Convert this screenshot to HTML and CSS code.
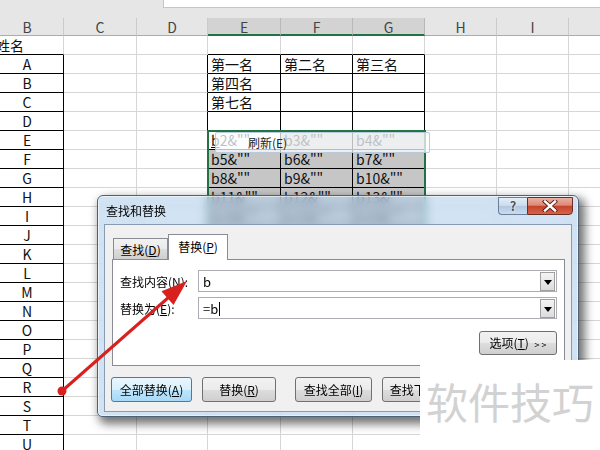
FILE: index.html
```html
<!DOCTYPE html>
<html lang="zh-CN">
<head>
<meta charset="utf-8">
<title>查找和替换</title>
<link rel="stylesheet" href="styles.css">
</head>
<body>
<div class="topbar"><div class="fx"></div></div>
<div class="sheet">
  <div class="h">B</div><div class="h">C</div><div class="h">D</div><div class="h hs">E</div><div class="h hs">F</div><div class="h hs">G</div><div class="h">H</div><div class="h">I</div><div class="h"></div>

  <div class="c kb lft">姓名</div><div class="c"></div><div class="c"></div><div class="c kb"></div><div class="c kb"></div><div class="c kb"></div><div class="c"></div><div class="c"></div><div class="c"></div>

  <div class="c k ctr">A</div><div class="c"></div><div class="c kr"></div><div class="c k">第一名</div><div class="c k">第二名</div><div class="c k">第三名</div><div class="c"></div><div class="c"></div><div class="c"></div>
  <div class="c k ctr">B</div><div class="c"></div><div class="c kr"></div><div class="c k">第四名</div><div class="c k"></div><div class="c k"></div><div class="c"></div><div class="c"></div><div class="c"></div>
  <div class="c k ctr">C</div><div class="c"></div><div class="c kr"></div><div class="c k">第七名</div><div class="c k"></div><div class="c k"></div><div class="c"></div><div class="c"></div><div class="c"></div>
  <div class="c k ctr">D</div><div class="c"></div><div class="c kr"></div><div class="c k"></div><div class="c k"></div><div class="c k"></div><div class="c"></div><div class="c"></div><div class="c"></div>

  <div class="c k ctr">E</div><div class="c"></div><div class="c kr"></div><div class="c k"><u>b</u>2&amp;""</div><div class="c k sel">b3&amp;""</div><div class="c k sel">b4&amp;""</div><div class="c"></div><div class="c"></div><div class="c"></div>
  <div class="c k ctr">F</div><div class="c"></div><div class="c kr"></div><div class="c k sel">b5&amp;""</div><div class="c k sel">b6&amp;""</div><div class="c k sel">b7&amp;""</div><div class="c"></div><div class="c"></div><div class="c"></div>
  <div class="c k ctr">G</div><div class="c"></div><div class="c kr"></div><div class="c k sel">b8&amp;""</div><div class="c k sel">b9&amp;""</div><div class="c k sel">b10&amp;""</div><div class="c"></div><div class="c"></div><div class="c"></div>
  <div class="c k ctr">H</div><div class="c"></div><div class="c kr"></div><div class="c k sel">b11&amp;""</div><div class="c k sel">b12&amp;""</div><div class="c k sel">b13&amp;""</div><div class="c"></div><div class="c"></div><div class="c"></div>
  <div class="c k ctr">I</div><div class="c"></div><div class="c kr"></div><div class="c k sel">b14&amp;""</div><div class="c k sel">b15&amp;""</div><div class="c k sel">b16&amp;""</div><div class="c"></div><div class="c"></div><div class="c"></div>
  <div class="c k ctr">J</div><div class="c"></div><div class="c kr"></div><div class="c k sel">b17&amp;""</div><div class="c k sel">b18&amp;""</div><div class="c k sel">b19&amp;""</div><div class="c"></div><div class="c"></div><div class="c"></div>
  <div class="c k ctr">K</div><div class="c"></div><div class="c kr"></div><div class="c k sel">b20&amp;""</div><div class="c k sel">b21&amp;""</div><div class="c k sel">b22&amp;""</div><div class="c"></div><div class="c"></div><div class="c"></div>

  <div class="c k ctr">L</div><div class="c"></div><div class="c"></div><div class="c"></div><div class="c"></div><div class="c"></div><div class="c"></div><div class="c"></div><div class="c"></div>
  <div class="c k ctr">M</div><div class="c"></div><div class="c"></div><div class="c"></div><div class="c"></div><div class="c"></div><div class="c"></div><div class="c"></div><div class="c"></div>
  <div class="c k ctr">N</div><div class="c"></div><div class="c"></div><div class="c"></div><div class="c"></div><div class="c"></div><div class="c"></div><div class="c"></div><div class="c"></div>
  <div class="c k ctr">O</div><div class="c"></div><div class="c"></div><div class="c"></div><div class="c"></div><div class="c"></div><div class="c"></div><div class="c"></div><div class="c"></div>
  <div class="c k ctr">P</div><div class="c"></div><div class="c"></div><div class="c"></div><div class="c"></div><div class="c"></div><div class="c"></div><div class="c"></div><div class="c"></div>
  <div class="c k ctr">Q</div><div class="c"></div><div class="c"></div><div class="c"></div><div class="c"></div><div class="c"></div><div class="c"></div><div class="c"></div><div class="c"></div>
  <div class="c k ctr">R</div><div class="c"></div><div class="c"></div><div class="c"></div><div class="c"></div><div class="c"></div><div class="c"></div><div class="c"></div><div class="c"></div>
  <div class="c k ctr">S</div><div class="c"></div><div class="c"></div><div class="c"></div><div class="c"></div><div class="c"></div><div class="c"></div><div class="c"></div><div class="c"></div>
  <div class="c k ctr">T</div><div class="c"></div><div class="c"></div><div class="c"></div><div class="c"></div><div class="c"></div><div class="c"></div><div class="c"></div><div class="c"></div>
  <div class="c k ctr">U</div><div class="c"></div><div class="c"></div><div class="c"></div><div class="c"></div><div class="c"></div><div class="c"></div><div class="c"></div><div class="c"></div>
</div>

<div class="selbox"></div>
<div class="tip">刷新(E)</div>

<div class="dialog">
  <div class="titlebar">查找和替换</div>
  <div class="capbtns">
    <div class="help">?</div>
    <div class="close"><svg width="16" height="12" viewBox="0 0 16 12"><path d="M3 1.5 L13 10.5 M13 1.5 L3 10.5" stroke="#5a1e16" stroke-width="4.2" stroke-linecap="square"/><path d="M3 1.5 L13 10.5 M13 1.5 L3 10.5" stroke="#fff" stroke-width="2.4" stroke-linecap="square"/></svg></div>
  </div>
  <div class="client">
    <div class="tabs">
      <div class="tab">查找(<u>D</u>)</div>
      <div class="tab on">替换(<u>P</u>)</div>
    </div>
    <div class="panel">
      <div class="row">
        <div class="lbl">查找内容(<u>N</u>):</div>
        <div class="inp"><span class="val">b</span><div class="dd"></div></div>
      </div>
      <div class="row">
        <div class="lbl">替换为(<u>E</u>):</div>
        <div class="inp"><span class="val">=b<span class="caret"></span></span><div class="dd"></div></div>
      </div>
      <div class="optrow"><div class="btn opt">选项(<u>T</u>) <span class="gt">&gt; &gt;</span></div></div>
    </div>
    <div class="btnrow">
      <div class="btn def w1">全部替换(<u>A</u>)</div>
      <div class="btn w2">替换(<u>R</u>)</div>
      <div class="btn w3">查找全部(<u>I</u>)</div>
      <div class="btn w4">查找下一个(<u>F</u>)</div>
    </div>
  </div>
</div>

<svg class="arrow" width="600" height="450" viewBox="0 0 600 450">
  <line x1="62" y1="391" x2="169" y2="297" stroke="#d8201e" stroke-width="3"/>
  <polygon points="187,281 173.5,305 161.5,291.3" fill="#d8201e"/>
  <circle cx="62" cy="391" r="4.5" fill="#d8201e"/>
</svg>

<div class="wm">软件技巧</div>
</body>
</html>
```

FILE: styles.css
```css
html, body {
  margin: 0;
  padding: 0;
  width: 600px;
  height: 450px;
  overflow: hidden;
  background: #fff;
  font-family: "Noto Sans CJK SC", "Noto Sans", sans-serif;
  position: relative;
}

.topbar {
  height: 18px;
  background: #e6e6e6;
  display: flex;
}
.fx {
  margin-left: 163px;
  flex: 1;
  height: 7px;
  background: #fff;
  border-left: 1px solid #c6c6c6;
  border-bottom: 1px solid #c6c6c6;
}

.sheet {
  margin-left: -9px;
  display: grid;
  grid-template-columns: 73px 73px 71px 73px 72px 72px 72px 72px 40px;
  grid-auto-rows: 19px;
  grid-template-rows: 18px;
}

.h {
  background: #e6e6e6;
  border-right: 1px solid #cbcbcb;
  border-bottom: 1px solid #ababab;
  color: #444;
  font-size: 14px;
  line-height: 18px;
  text-align: center;
  box-sizing: border-box;
}
.hs {
  background: #d3d3d3;
  border-bottom: 2px solid #217346;
  border-right-color: #b9b9b9;
}

.c {
  box-sizing: border-box;
  border-right: 1px solid #d6d6d6;
  border-bottom: 1px solid #d6d6d6;
  font-size: 14px;
  line-height: 19px;
  padding: 0 3px;
  white-space: nowrap;
  overflow: hidden;
  color: #111;
}
.c u { text-decoration-thickness: 1px; }
.k { border-right-color: #000; border-bottom-color: #000; }
.kb { border-bottom-color: #000; }
.kr { border-right-color: #000; }
.ctr { text-align: center; padding: 0; }
.lft { padding-left: 5px; }
.sel { background: #c6c6c6; }

.selbox {
  position: absolute;
  left: 207px;
  top: 130px;
  width: 215px;
  height: 120px;
  border: 2px solid #217346;
}

.tip {
  position: absolute;
  left: 215px;
  top: 132px;
  width: 215px;
  height: 21px;
  box-sizing: border-box;
  background: rgba(250, 252, 255, 0.74);
  border: 1px solid rgba(175, 195, 215, 0.85);
  border-radius: 2px;
  font-size: 12px;
  line-height: 19px;
  padding-left: 32px;
  color: #222;
}

.dialog {
  position: absolute;
  left: 97px;
  top: 195px;
  width: 482px;
  height: 222px;
  box-sizing: border-box;
  border: 1px solid #4e6176;
  border-radius: 6px 6px 5px 5px;
  background: rgba(178, 206, 236, 0.58);
  backdrop-filter: blur(5px);
  box-shadow: 4px 5px 10px 2px rgba(0, 0, 0, 0.55), inset 0 0 0 1px rgba(255, 255, 255, 0.55);
  padding: 0 6px 4px 6px;
  display: flex;
  flex-direction: column;
}
.titlebar {
  height: 28px;
  line-height: 29px;
  font-size: 12px;
  color: #000;
  padding-left: 2px;
  flex: none;
}
.capbtns {
  position: absolute;
  right: 5px;
  top: 1px;
  display: flex;
}
.help {
  width: 29px;
  height: 18px;
  box-sizing: border-box;
  border: 1px solid #6a7f99;
  border-right: none;
  border-radius: 0 0 0 4px;
  background: linear-gradient(#e4edf7, #cbdbec 48%, #b3c8e0 52%, #c9dcef);
  color: #555;
  font-size: 13px;
  font-weight: bold;
  text-align: center;
  line-height: 16px;
  text-shadow: 0 0 2px #fff;
}
.close {
  width: 46px;
  height: 18px;
  box-sizing: border-box;
  border: 1px solid #6b2e25;
  border-radius: 0 0 4px 0;
  background: linear-gradient(#eab0a3, #db8a76 45%, #c6432b 52%, #d4654a);
  display: flex;
  align-items: center;
  justify-content: center;
}

.client {
  flex: 1;
  background: #f0f0f0;
  border: 1px solid #879bb4;
  padding: 9px 0 0 7px;
  display: flex;
  flex-direction: column;
  font-size: 12px;
  color: #000;
}
.tabs {
  display: flex;
  align-items: flex-end;
  height: 25px;
  padding-left: 1px;
  position: relative;
  z-index: 1;
}
.tab {
  width: 55px;
  height: 21px;
  box-sizing: border-box;
  border: 1px solid #898c95;
  border-bottom: none;
  background: linear-gradient(#f2f2f2, #ebebeb 50%, #dddddd 51%, #cfcfcf);
  text-align: center;
  line-height: 21px;
}
.tab.on {
  width: 60px;
  height: 26px;
  margin-bottom: -1px;
  background: #fff;
  line-height: 23px;
}
.panel {
  width: 453px;
  height: 107px;
  box-sizing: border-box;
  border: 1px solid #898c95;
  background: #fff;
  padding: 10px 7px 0 7px;
  display: flex;
  flex-direction: column;
  gap: 5px;
}
.row {
  display: flex;
  align-items: center;
}
.lbl {
  width: 78px;
  flex: none;
}
.inp {
  width: 359px;
  height: 22px;
  box-sizing: border-box;
  border: 1px solid #abadb3;
  background: #fff;
  display: flex;
  align-items: center;
  justify-content: space-between;
  padding: 0 1px 0 4px;
  font-size: 13px;
}
.caret {
  display: inline-block;
  width: 1px;
  height: 14px;
  background: #000;
  vertical-align: -2px;
  margin-left: 1px;
}
.dd {
  width: 15px;
  height: 19px;
  box-sizing: border-box;
  border: 1px solid #a0a0a0;
  background: linear-gradient(#f4f4f4, #dcdcdc);
  position: relative;
}
.dd::after {
  content: "";
  position: absolute;
  left: 3px;
  top: 7px;
  border-left: 4px solid transparent;
  border-right: 4px solid transparent;
  border-top: 5px solid #000;
}
.optrow {
  display: flex;
  justify-content: flex-end;
  margin-top: 7px;
}
.btn {
  height: 25px;
  box-sizing: border-box;
  border: 1px solid #707070;
  border-radius: 3px;
  background: linear-gradient(#f2f2f2, #ebebeb 50%, #dddddd 51%, #cfcfcf);
  text-align: center;
  line-height: 23px;
  white-space: nowrap;
  overflow: hidden;
  font-size: 12px;
}
.opt {
  width: 78px;
  height: 24px;
  line-height: 22px;
}
.gt {
  font-size: 9px;
  margin-left: 3px;
}
.btnrow {
  display: flex;
  margin: 11px 0 0 -1px;
}
.def {
  border-color: #3c7fb1;
  background: linear-gradient(#eaf6fd, #d9f0fc 50%, #bee6fd 51%, #a7d9f5);
}
.w1 { width: 81px; margin-right: 10px; }
.w2 { width: 74px; margin-right: 19px; }
.w3 { width: 77px; margin-right: 10px; }
.w4 { width: 90px; }

.arrow {
  position: absolute;
  left: 0;
  top: 0;
  pointer-events: none;
}

.wm {
  position: absolute;
  left: 420px;
  top: 360px;
  width: 180px;
  height: 90px;
  background: #fff;
  color: #d2d2d2;
  font-size: 42px;
  line-height: 42px;
  padding: 20px 0 0 6px;
  box-sizing: border-box;
  white-space: nowrap;
}
```
